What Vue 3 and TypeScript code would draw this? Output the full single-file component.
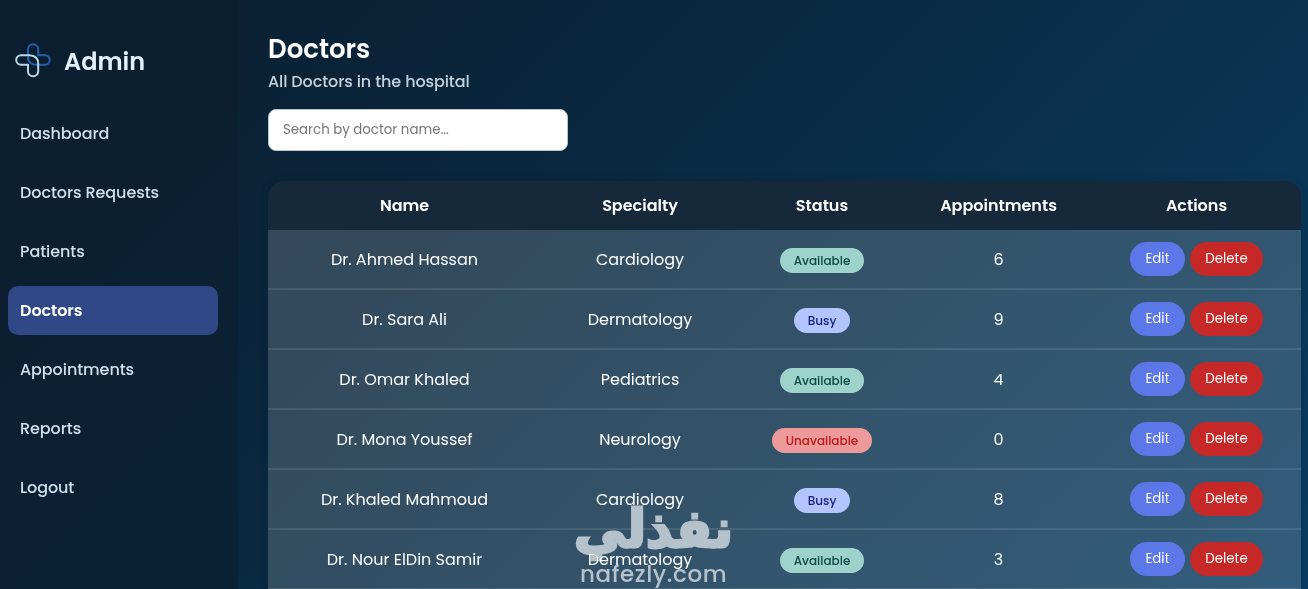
<script setup lang="ts">
import { ref, computed } from 'vue';

interface Doctor {
  name: string
  specialty: string
  status: string
  appointments: number
}

const links = ['Dashboard', 'Doctors Requests', 'Patients', 'Doctors', 'Appointments', 'Reports', 'Logout'];
const activeLink = ref('Doctors');
const search = ref('');

const doctors = ref<Doctor[]>([
  { name: 'Dr. Ahmed Hassan', specialty: 'Cardiology', status: 'Available', appointments: 6 },
  { name: 'Dr. Sara Ali', specialty: 'Dermatology', status: 'Busy', appointments: 9 },
  { name: 'Dr. Omar Khaled', specialty: 'Pediatrics', status: 'Available', appointments: 4 },
  { name: 'Dr. Mona Youssef', specialty: 'Neurology', status: 'Unavailable', appointments: 0 },
  { name: 'Dr. Khaled Mahmoud', specialty: 'Cardiology', status: 'Busy', appointments: 8 },
  { name: 'Dr. Nour ElDin Samir', specialty: 'Dermatology', status: 'Available', appointments: 3 },
]);

const filteredDoctors = computed(() =>
  doctors.value.filter(d => d.name.toLowerCase().includes(search.value.toLowerCase()))
);

const removeDoctor = (name: string) => {
  doctors.value = doctors.value.filter(d => d.name !== name);
}
</script>

<template>
  <div class="layout">
    <aside class="sidebar">
      <div class="brand">
        <svg class="logo" viewBox="0 0 36 36" fill="none" stroke-width="2">
          <path stroke="#2161ac" d="M13 17V6.300a5.100 5.100 0 0 1 10.200 0V12.200H30a4.800 4.800 0 0 1 0 9.600H21Q13 21.300 13 14" />
          <path stroke="#b9d9e6" d="M13 21.800H6a4.800 4.800 0 0 1 0-9.600H15Q23.200 13 23.200 20.500V28.200a5.100 5.100 0 0 1-10.200 0V21" />
        </svg>
        <h2>Admin</h2>
      </div>
      <nav>
        <a v-for="link in links" :key="link" :class="{ active: link === activeLink }" @click="activeLink = link"><span>{{ link }}</span></a>
      </nav>
    </aside>

    <main class="content">
      <h1>Doctors</h1>
      <p class="subtitle">All Doctors in the hospital</p>
      <input v-model="search" type="text" placeholder="Search by doctor name..." />

      <table>
        <colgroup>
          <col class="col-name" />
          <col class="col-specialty" />
          <col class="col-status" />
          <col class="col-appointments" />
          <col />
        </colgroup>
        <thead>
          <tr>
            <th>Name</th>
            <th>Specialty</th>
            <th>Status</th>
            <th>Appointments</th>
            <th>Actions</th>
          </tr>
        </thead>
        <tbody>
          <tr v-for="doctor in filteredDoctors" :key="doctor.name">
            <td>{{ doctor.name }}</td>
            <td>{{ doctor.specialty }}</td>
            <td><span class="badge" :class="doctor.status.toLowerCase()">{{ doctor.status }}</span></td>
            <td>{{ doctor.appointments }}</td>
            <td>
              <div class="actions">
                <button class="edit">Edit</button>
                <button class="delete" @click="removeDoctor(doctor.name)">Delete</button>
              </div>
            </td>
          </tr>
        </tbody>
      </table>
    </main>

    <div class="watermark">
      <span class="mark-ar" lang="ar" dir="rtl">نفذلي</span>
      <span class="mark-en">nafezly.com</span>
    </div>
  </div>
</template>

<style>
body {
  margin: 0;
  overflow: hidden;
}
</style>

<style scoped>
.layout {
  position: relative;
  display: flex;
  height: 100vh;
  overflow: hidden;
  font-family: Poppins, Inter, sans-serif;
  color: #fff;
  background: linear-gradient(135deg, #0b1e2e 0%, #0a263d 35%, #0a3350 70%, #093c62 100%);
}

.sidebar {
  box-sizing: border-box;
  width: 238px;
  flex-shrink: 0;
  padding: 37px 20px 0 8px;
  background: rgba(12, 30, 47, 0.65);
}

.brand {
  display: flex;
  align-items: center;
  gap: 13px;
  height: 48px;
  margin: 0 0 24px 7px;
}

.logo {
  width: 36px;
  height: 36px;
}

.brand h2 {
  margin: 0;
  font-size: 24px;
  font-weight: 600;
  color: #e3f2fd;
}

nav {
  display: flex;
  flex-direction: column;
  gap: 10px;
}

nav a {
  display: flex;
  align-items: center;
  height: 49px;
  padding-left: 12px;
  border-radius: 10px;
  font-size: 16px;
  font-weight: 500;
  letter-spacing: -0.08px;
  color: #cfdfec;
  cursor: pointer;
}

nav a.active {
  background: #304885;
  color: #fff;
  font-weight: 600;
}

.content {
  width: 1033px;
  flex-shrink: 0;
  padding: 30px 0 0 30px;
}

h1 {
  margin: 0;
  font-size: 26px;
  line-height: 38px;
  font-weight: 600;
}

.subtitle {
  margin: 1px 0 15px;
  font-size: 16px;
  line-height: 25px;
  font-weight: 500;
  letter-spacing: -0.1px;
  color: #c0d2df;
}

input {
  display: block;
  box-sizing: border-box;
  width: 300px;
  height: 42px;
  margin-bottom: 30px;
  padding: 0 14px;
  border: 1px solid #b4c5d2;
  border-radius: 8px;
  background: #fff;
  font-family: inherit;
  font-size: 13.33px;
}

input::placeholder {
  color: #757575;
}

table {
  width: 100%;
  table-layout: fixed;
  border-collapse: separate;
  border-spacing: 0;
  overflow: hidden;
  border-radius: 16px 16px 0 0;
  text-align: center;
  box-shadow: 0 0 10px rgba(0, 0, 0, 0.1);
}

.col-name {
  width: 273px;
}

.col-specialty {
  width: 198px;
}

.col-status {
  width: 166px;
}

.col-appointments {
  width: 187px;
}

th {
  height: 49px;
  padding: 0;
  background: #15293b;
  font-size: 16px;
  font-weight: 600;
}

td {
  box-sizing: border-box;
  height: 60px;
  padding: 0;
  background: rgba(255, 255, 255, 0.17);
  border-bottom: 2px solid rgba(255, 255, 255, 0.1);
  font-size: 16px;
}

.badge {
  display: inline-block;
  position: relative;
  top: 1px;
  padding: 0 14px;
  border-radius: 13px;
  font-size: 12px;
  line-height: 25px;
  font-weight: 500;
}

.available {
  background: #9dd3cb;
  color: #0c4a43;
}

.busy {
  background: #b3c5ff;
  color: #1a237e;
}

.unavailable {
  background: #ef9a9a;
  color: #b71c1c;
}

.actions {
  display: flex;
  justify-content: center;
  gap: 5px;
}

button {
  height: 34px;
  padding: 0;
  border: none;
  border-radius: 17px;
  color: #fff;
  font-family: inherit;
  font-size: 13.33px;
  cursor: pointer;
}

.edit {
  width: 55px;
  background: #5c78e8;
}

.delete {
  width: 73px;
  background: #c62828;
}

.watermark {
  position: absolute;
  left: 574px;
  top: 500px;
  width: 158px;
  height: 89px;
  color: #b6c2cb;
  mix-blend-mode: lighten;
  pointer-events: none;
}

.mark-ar {
  position: absolute;
  right: -1px;
  top: -6px;
  font-family: "DejaVu Sans", sans-serif;
  font-weight: 700;
  font-size: 52px;
  line-height: 70px;
  -webkit-text-stroke: 3px #b6c2cb;
}

.mark-en {
  position: absolute;
  left: 6px;
  top: 61px;
  font-size: 23px;
  line-height: 27px;
  font-weight: 500;
  letter-spacing: 0.6px;
}
</style>
